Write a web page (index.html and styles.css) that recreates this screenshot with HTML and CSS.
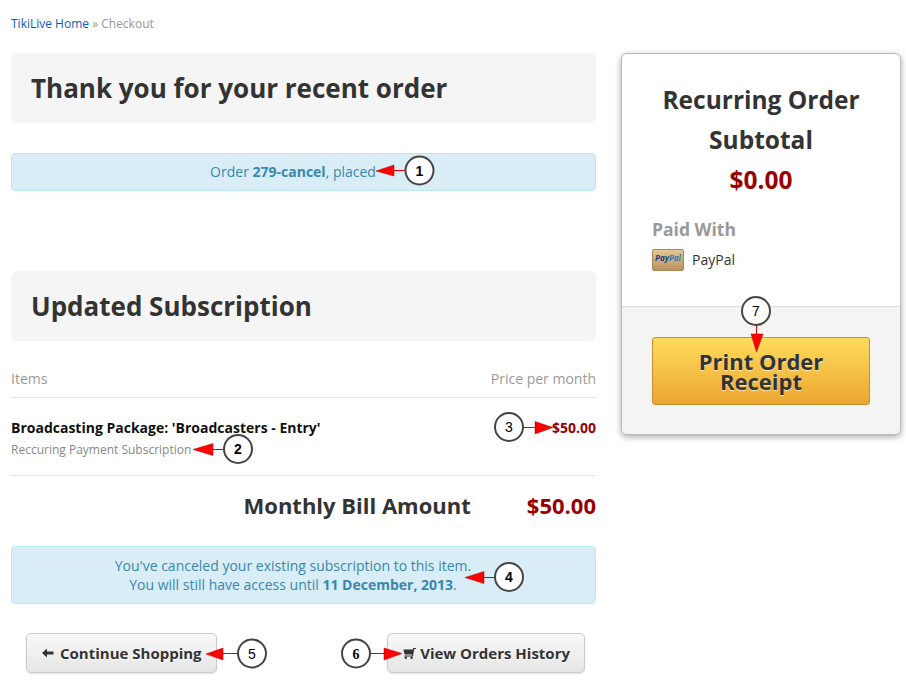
FILE: index.html
```html
<!DOCTYPE html>
<html lang="en">
<head>
<meta charset="utf-8">
<title>Checkout</title>
<link rel="stylesheet" href="styles.css">
</head>
<body>
<div class="page">
  <main class="main">
    <nav class="crumbs"><a href="#">TikiLive Home</a> » Checkout</nav>
    <h1 class="panel-title">Thank you for your recent order</h1>
    <div class="alert alert-order">Order <b>279-cancel</b>, placed</div>
    <h1 class="panel-title panel-second">Updated Subscription</h1>
    <div class="items-head"><span>Items</span><span>Price per month</span></div>
    <div class="item">
      <div>
        <div class="item-name">Broadcasting Package: 'Broadcasters - Entry'</div>
        <div class="item-sub">Reccuring Payment Subscription</div>
      </div>
      <div class="item-price">$50.00</div>
    </div>
    <div class="bill"><span class="bill-label">Monthly Bill Amount</span><span class="bill-amount">$50.00</span></div>
    <div class="alert alert-note">You've canceled your existing subscription to this item.<br>You will still have access until <b>11 December, 2013</b>.</div>
    <div class="actions">
      <a class="btn" href="#">
        <svg class="btn-icon" width="12" height="10" viewBox="0 0 12 10"><path d="M0 5 5 .5V3.4H11.5V6.6H5V9.500Z" fill="#333"/></svg>
        Continue Shopping</a>
      <a class="btn btn-history" href="#">
        <svg class="btn-icon" width="13" height="12" viewBox="0 0 13 12"><path d="M13 1H10.400L9.600 2.400H.4L1.600 7.600H9.200L9 8.600H1.600V9.600H10L11.200 2H13Z" fill="#333"/><circle cx="8.600" cy="10.800" r="1.200" fill="#333"/><circle cx="2.800" cy="10.800" r="1.200" fill="#333"/></svg>
        View Orders History</a>
    </div>
  </main>
  <aside class="card">
    <div class="card-top">
      <h2 class="card-title">Recurring Order Subtotal</h2>
      <div class="card-total">$0.00</div>
      <h3 class="paid-title">Paid With</h3>
      <div class="paid-row"><span class="pp-badge"><i>Pay<em>Pal</em></i></span><span>PayPal</span></div>
    </div>
    <div class="card-bottom">
      <a class="print-btn" href="#">Print Order Receipt</a>
    </div>
  </aside>
</div>
<svg class="callouts" width="906" height="681" viewBox="0 0 906 681">
  <g class="arrows">
    <path d="M394 170.500H405"/><polygon points="376,171 394,165 394,176"/>
    <path d="M212 449.500H224"/><polygon points="193,449.500 213,443.500 213,455.500"/>
    <path d="M524 427.500H536"/><polygon points="553,427.500 535,421.500 535,434"/>
    <path d="M483 577.500H495"/><polygon points="465,577.500 484,571.500 484,583.500"/>
    <path d="M223 653.500H238"/><polygon points="206,654 223,648 223,660"/>
    <path d="M370 653.500H385"/><polygon points="402,653.500 384,648 384,660"/>
    <path d="M756.500 325V335"/><polygon points="756.500,352 751,334 763,334"/>
  </g>
  <g class="rings">
    <circle cx="419.500" cy="170.500" r="14"/>
    <circle cx="238" cy="449" r="14"/>
    <circle cx="509" cy="427" r="14"/>
    <circle cx="509" cy="577" r="14"/>
    <circle cx="252" cy="653.500" r="14"/>
    <circle cx="356" cy="653.500" r="14"/>
    <circle cx="756" cy="311" r="14"/>
  </g>
  <g class="numbers">
    <text x="419.500" y="175.500">1</text>
    <text x="238" y="454">2</text>
    <text class="num-thin" x="509" y="432">3</text>
    <text x="509" y="582">4</text>
    <text class="num-thin" x="252" y="658.500">5</text>
    <text class="num-serif" x="356" y="658.500">6</text>
    <text class="num-thin" x="756" y="316">7</text>
  </g>
</svg>
</body>
</html>
```
FILE: styles.css
```css
* { box-sizing: border-box; }
html, body { margin: 0; padding: 0; background: #fff; }
body {
  position: relative;
  width: 906px;
  height: 681px;
  overflow: hidden;
  font-family: "Open Sans", "Liberation Sans", sans-serif;
  color: #333;
}
a { text-decoration: none; }
.page { display: flex; align-items: flex-start; gap: 25px; padding-left: 11px; }
.main { width: 585px; flex: none; }
.crumbs { height: 53px; padding-top: 15px; font-size: 12px; line-height: 18px; color: #999; }
.crumbs a { color: #0b5cc0; }
.panel-title {
  margin: 0;
  height: 70px;
  padding-left: 20px;
  background: #f5f5f5;
  border-radius: 6px;
  font-size: 26px;
  font-weight: 700;
  line-height: 70px;
  color: #333;
}
.panel-second { margin-top: 80px; }
.alert {
  background: #d9edf7;
  border: 1px solid #bce8f1;
  border-radius: 4px;
  color: #3a87ad;
  font-size: 14px;
  line-height: 19px;
  text-align: center;
  padding-left: 14px;
  padding-right: 35px;
}
.alert-order { margin-top: 30px; height: 38px; padding-top: 8px; }
.items-head {
  display: flex;
  justify-content: space-between;
  height: 57px;
  padding-top: 28px;
  border-bottom: 1px solid #e5e5e5;
  font-size: 14px;
  line-height: 20px;
  color: #999;
}
.item {
  display: flex;
  justify-content: space-between;
  height: 78px;
  padding-top: 20px;
  border-bottom: 1px solid #e5e5e5;
}
.item-name { font-size: 14px; font-weight: 700; line-height: 20px; color: #111; }
.item-sub { margin-top: 2px; font-size: 12px; line-height: 20px; color: #888; }
.item-price { font-size: 14px; font-weight: 700; line-height: 20px; color: #900; }
.bill {
  display: flex;
  justify-content: flex-end;
  gap: 56px;
  height: 70px;
  padding-top: 13px;
  font-size: 22px;
  font-weight: 700;
  line-height: 32px;
}
.bill-amount { color: #900; }
.alert-note { height: 58px; padding-top: 9px; }
.actions { display: flex; padding: 29px 11px 0 15px; justify-content: space-between; }
.btn {
  display: flex;
  align-items: center;
  gap: 6px;
  height: 40px;
  padding: 0 14px 0 15px;
  background: linear-gradient(#f9f9f9, #e6e6e6);
  border: 1px solid #ccc;
  border-radius: 5px;
  box-shadow: 0 1px 2px rgba(0, 0, 0, .12);
  font-size: 15px;
  font-weight: 700;
  color: #333;
  text-shadow: 0 1px 1px #fff;
}
.btn-history { gap: 4px; }
.btn-icon { flex: none; }
.card {
  width: 280px;
  height: 382px;
  margin-top: 53px;
  flex: none;
  background: #fff;
  border: 1px solid #bbb;
  border-radius: 6px;
  box-shadow: 0 2px 6px rgba(0, 0, 0, .35);
  overflow: hidden;
}
.card-top { height: 252px; padding: 26px 30px 0; }
.card-title {
  margin: 0;
  text-align: center;
  font-size: 24.500px;
  font-weight: 700;
  line-height: 40px;
  color: #333;
}
.card-total { text-align: center; font-size: 24.500px; font-weight: 700; line-height: 40px; color: #900; }
.paid-title { margin: 17px 0 0; font-size: 17.500px; font-weight: 700; line-height: 24px; color: #999; }
.paid-row { display: flex; align-items: center; gap: 8px; margin-top: 8px; font-size: 14px; line-height: 22px; color: #333; }
.pp-badge {
  display: block;
  width: 32px;
  height: 22px;
  padding-top: 1px;
  background: linear-gradient(#e3c796, #bb9160);
  border: 1px solid #a88657;
  border-radius: 2px;
  font-size: 8px;
  font-weight: 700;
  line-height: 14px;
  text-align: center;
  color: #1c3f7c;
}
.pp-badge em { color: #2d79b8; }
.card-bottom { height: 128px; padding: 30px 30px 0; background: #f4f4f4; border-top: 1px solid #ddd; }
.print-btn {
  display: flex;
  align-items: center;
  justify-content: center;
  height: 68px;
  padding: 0 30px 1px;
  background: linear-gradient(#fedc5b, #eba631);
  border: 1px solid #c58f34;
  border-radius: 3px;
  font-size: 22px;
  font-weight: 700;
  line-height: 20px;
  text-align: center;
  color: #333;
  text-shadow: 0 1px 1px rgba(255, 255, 255, .7);
}
.callouts { position: absolute; left: 0; top: 0; pointer-events: none; }
.arrows path { stroke: #e00000; stroke-width: 1; fill: none; }
.arrows polygon { fill: #f00; stroke: #a00; stroke-width: .5; }
.rings circle { fill: #fff; stroke: #444; stroke-width: 2; }
.numbers text {
  font-family: "Liberation Sans", sans-serif;
  font-size: 14px;
  font-weight: 700;
  text-anchor: middle;
  fill: #000;
}
.numbers .num-thin { font-weight: 400; }
.numbers .num-serif { font-family: "Liberation Serif", serif; }
```
